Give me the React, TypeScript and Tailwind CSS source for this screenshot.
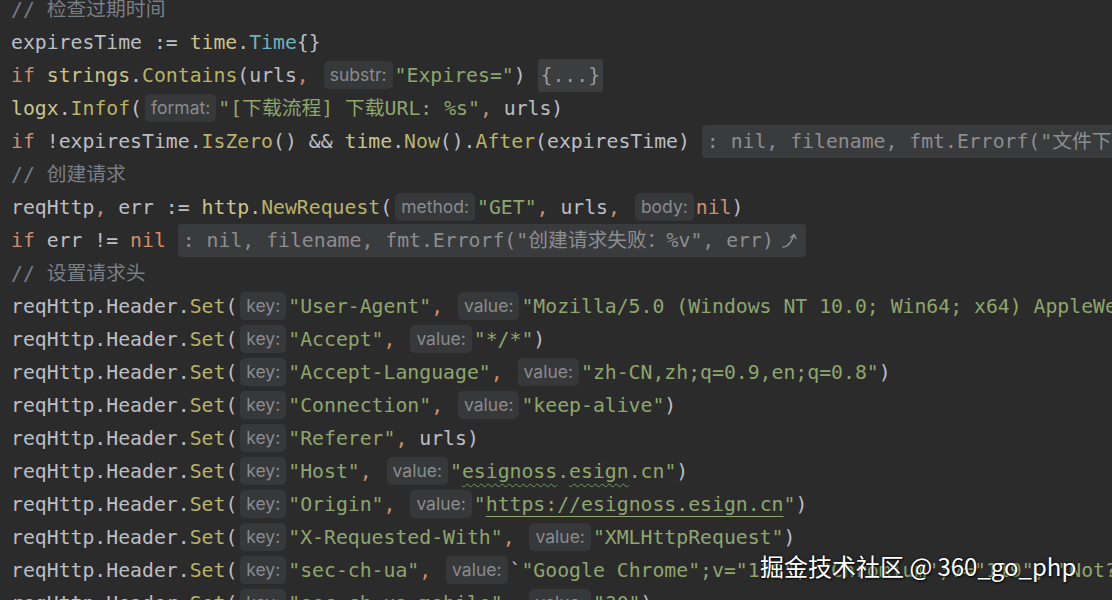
import React from "react";

const D = ({ children }: { children: React.ReactNode }) => <span className="text-[#bcbec4]">{children}</span>;
const K = ({ children }: { children: React.ReactNode }) => <span className="text-[#cf8e6d]">{children}</span>;
const P = ({ children }: { children: React.ReactNode }) => <span className="text-[#c8c48c]">{children}</span>;
const F = ({ children }: { children: React.ReactNode }) => <span className="text-[#b8b26a]">{children}</span>;
const T = ({ children }: { children: React.ReactNode }) => <span className="text-[#6fb0bd]">{children}</span>;
const S = ({ children }: { children: React.ReactNode }) => <span className="text-[#8fa56e]">{children}</span>;
const C = ({ children }: { children: React.ReactNode }) => <span className="text-[#7a7e85]">{children}</span>;

const H = ({ children }: { children: React.ReactNode }) => (
  <span className="inline-flex items-center h-[28px] px-[6px] ml-[3px] mr-[2px] rounded-[5px] bg-[#37383a] text-[#8a8b8e] font-['Inter','Noto_Sans',sans-serif] text-[17.5px] leading-none">
    {children}
  </span>
);

const Block = ({ children, full }: { children: React.ReactNode; full?: boolean }) => (
  <span
    className={
      "inline-flex items-center h-[33px] pl-[5px] pr-[6px] bg-[#3a3b3d] text-[#8c8d90] " + (full ? "rounded-l-[4px]" : "rounded-[4px]")
    }
  >
    {children}
  </span>
);

const Comma = () => <K>,</K>;

const Line = ({ children }: { children?: React.ReactNode }) => (
  <div className="h-[33px] flex items-center whitespace-pre">{children}</div>
);

const SetCall = ({ children }: { children: React.ReactNode }) => (
  <Line>
    <D>reqHttp.Header.</D>
    <F>Set</F>
    <D>(</D>
    <H>key:</H>
    {children}
  </Line>
);

const Arrow = () => (
  <svg width="20" height="20" viewBox="0 0 20 20" className="ml-[6px]" fill="none" stroke="#8c8d90" strokeWidth="1.5" strokeLinecap="round" strokeLinejoin="round">
    <path d="M3 17 C 8 17, 11 13, 14 5" />
    <path d="M10.5 7.5 L14 4.5 L16 8.5" />
  </svg>
);

export default function App() {
  return (
    <div className="relative w-[1112px] h-[600px] overflow-hidden bg-[#2b2b2c] font-['DejaVu_Sans_Mono','Noto_Sans_CJK_SC',monospace] text-[19.8px] leading-[33px]">
      <div className="flex flex-col -mt-[7.5px] pl-[11px]">
        <Line>
          <C>// 检查过期时间</C>
        </Line>
        <Line>
          <D>expiresTime := </D>
          <P>time</P>
          <D>.</D>
          <T>Time</T>
          <D>{"{}"}</D>
        </Line>
        <Line>
          <K>if </K>
          <P>strings</P>
          <D>.</D>
          <F>Contains</F>
          <D>(urls</D>
          <Comma />
          <D> </D>
          <H>substr:</H>
          <S>"Expires="</S>
          <D>) </D>
          <span className="inline-flex items-center h-[33px] px-[3px] bg-[#3c3d3f] text-[#9a9b9e] rounded-[3px]">{"{...}"}</span>
        </Line>
        <Line>
          <P>logx</P>
          <D>.</D>
          <F>Infof</F>
          <D>(</D>
          <H>format:</H>
          <S>"[下载流程] 下载URL: %s"</S>
          <Comma />
          <D> urls)</D>
        </Line>
        <Line>
          <K>if </K>
          <D>!expiresTime.</D>
          <F>IsZero</F>
          <D>() && </D>
          <P>time</P>
          <D>.</D>
          <F>Now</F>
          <D>().</D>
          <F>After</F>
          <D>(expiresTime) </D>
          <Block full>: nil, filename, fmt.Errorf("文件下载链接已过期")</Block>
        </Line>
        <Line>
          <C>// 创建请求</C>
        </Line>
        <Line>
          <D>reqHttp</D>
          <Comma />
          <D> err := </D>
          <P>http</P>
          <D>.</D>
          <F>NewRequest</F>
          <D>(</D>
          <H>method:</H>
          <S>"GET"</S>
          <Comma />
          <D> urls</D>
          <Comma />
          <D> </D>
          <H>body:</H>
          <K>nil</K>
          <D>)</D>
        </Line>
        <Line>
          <K>if </K>
          <D>err != </D>
          <K>nil</K>
          <D> </D>
          <Block>
            : nil, filename, fmt.Errorf("创建请求失败：%v", err)
            <Arrow />
          </Block>
        </Line>
        <Line>
          <C>// 设置请求头</C>
        </Line>
        <SetCall>
          <S>"User-Agent"</S>
          <Comma />
          <D> </D>
          <H>value:</H>
          <S>"Mozilla/5.0 (Windows NT 10.0; Win64; x64) AppleWebKit/537.36 (KHTML, like Gecko)"</S>
        </SetCall>
        <SetCall>
          <S>"Accept"</S>
          <Comma />
          <D> </D>
          <H>value:</H>
          <S>"*/*"</S>
          <D>)</D>
        </SetCall>
        <SetCall>
          <S>"Accept-Language"</S>
          <Comma />
          <D> </D>
          <H>value:</H>
          <S>"zh-CN,zh;q=0.9,en;q=0.8"</S>
          <D>)</D>
        </SetCall>
        <SetCall>
          <S>"Connection"</S>
          <Comma />
          <D> </D>
          <H>value:</H>
          <S>"keep-alive"</S>
          <D>)</D>
        </SetCall>
        <SetCall>
          <S>"Referer"</S>
          <Comma />
          <D> urls)</D>
        </SetCall>
        <SetCall>
          <S>"Host"</S>
          <Comma />
          <D> </D>
          <H>value:</H>
          <S>
            "<span className="underline decoration-wavy decoration-[#6f9a5c] underline-offset-[5px] decoration-[1px]">esignoss</span>.
            <span className="underline decoration-wavy decoration-[#6f9a5c] underline-offset-[5px] decoration-[1px]">esign</span>.cn"
          </S>
          <D>)</D>
        </SetCall>
        <SetCall>
          <S>"Origin"</S>
          <Comma />
          <D> </D>
          <H>value:</H>
          <S>
            "<span className="underline decoration-[#8fa56e] underline-offset-[5px] decoration-[1px]">https://esignoss.esign.cn</span>"
          </S>
          <D>)</D>
        </SetCall>
        <SetCall>
          <S>"X-Requested-With"</S>
          <Comma />
          <D> </D>
          <H>value:</H>
          <S>"XMLHttpRequest"</S>
          <D>)</D>
        </SetCall>
        <SetCall>
          <S>"sec-ch-ua"</S>
          <Comma />
          <D> </D>
          <H>value:</H>
          <D>`</D>
          <S>"Google Chrome";v="119", "Chromium";v="119", "Not?A_Brand";v="24"</S>
        </SetCall>
        <SetCall>
          <S>"sec-ch-ua-mobile"</S>
          <Comma />
          <D> </D>
          <H>value:</H>
          <S>"?0"</S>
          <D>)</D>
        </SetCall>
      </div>
      <div className="absolute left-[760px] top-[552px] text-white text-[24px] leading-[28px] whitespace-nowrap font-['Noto_Sans_CJK_SC','Noto_Sans',sans-serif] [text-shadow:0_0_3px_rgba(0,0,0,0.9),1px_1px_2px_rgba(0,0,0,0.8)]">
        掘金技术社区 @ 360_go_php
      </div>
    </div>
  );
}
